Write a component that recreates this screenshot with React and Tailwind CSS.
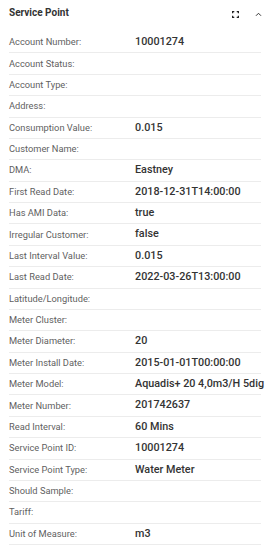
import React from 'react';

const rows = [
  ['Account Number:', '10001274'],
  ['Account Status:', ''],
  ['Account Type:', ''],
  ['Address:', ''],
  ['Consumption Value:', '0.015'],
  ['Customer Name:', ''],
  ['DMA:', 'Eastney'],
  ['First Read Date:', '2018-12-31T14:00:00'],
  ['Has AMI Data:', 'true'],
  ['Irregular Customer:', 'false'],
  ['Last Interval Value:', '0.015'],
  ['Last Read Date:', '2022-03-26T13:00:00'],
  ['Latitude/Longitude:', ''],
  ['Meter Cluster:', ''],
  ['Meter Diameter:', '20'],
  ['Meter Install Date:', '2015-01-01T00:00:00'],
  ['Meter Model:', 'Aquadis+ 20 4,0m3/H 5dig'],
  ['Meter Number:', '201742637'],
  ['Read Interval:', '60 Mins'],
  ['Service Point ID:', '10001274'],
  ['Service Point Type:', 'Water Meter'],
  ['Should Sample:', ''],
  ['Tariff:', ''],
  ['Unit of Measure:', 'm3'],
];

const App = () => {
  return (
    <div className="w-[275px] h-[549px] bg-white overflow-hidden" style={{ fontFamily: 'Roboto, "Liberation Sans", sans-serif' }}>
      <div className="flex items-start justify-between pl-[9px] pr-[13px] h-[32px] pt-[5px]">
        <h2 className="text-[10px] font-bold text-[#333] leading-[16px]">Service Point</h2>
        <div className="flex items-center gap-[16px] pt-[6px]">
          <svg width="7" height="7" viewBox="0 0 8 8" fill="none" stroke="#222" strokeWidth="1.4">
            <path d="M0.7 2.6V0.7H2.6M5.4 0.7H7.3V2.6M7.3 5.4V7.3H5.4M2.6 7.3H0.7V5.4" />
          </svg>
          <svg width="7" height="5" viewBox="0 0 8 6" fill="none" stroke="#333" strokeWidth="1.2">
            <path d="M1 4.5L4 1.5L7 4.5" />
          </svg>
        </div>
      </div>
      <div className="pl-[9px] pr-[14px]">
        {rows.map(([label, value]) => (
          <div key={label} className="flex items-center h-[21.38px] border-b border-[#ececec]">
            <div className="w-[126px] shrink-0 text-[9.3px] text-[#5f5f5f]">{label}</div>
            <div className="text-[10.8px] font-medium text-[#333] whitespace-nowrap">{value}</div>
          </div>
        ))}
      </div>
    </div>
  );
};

export default App;
